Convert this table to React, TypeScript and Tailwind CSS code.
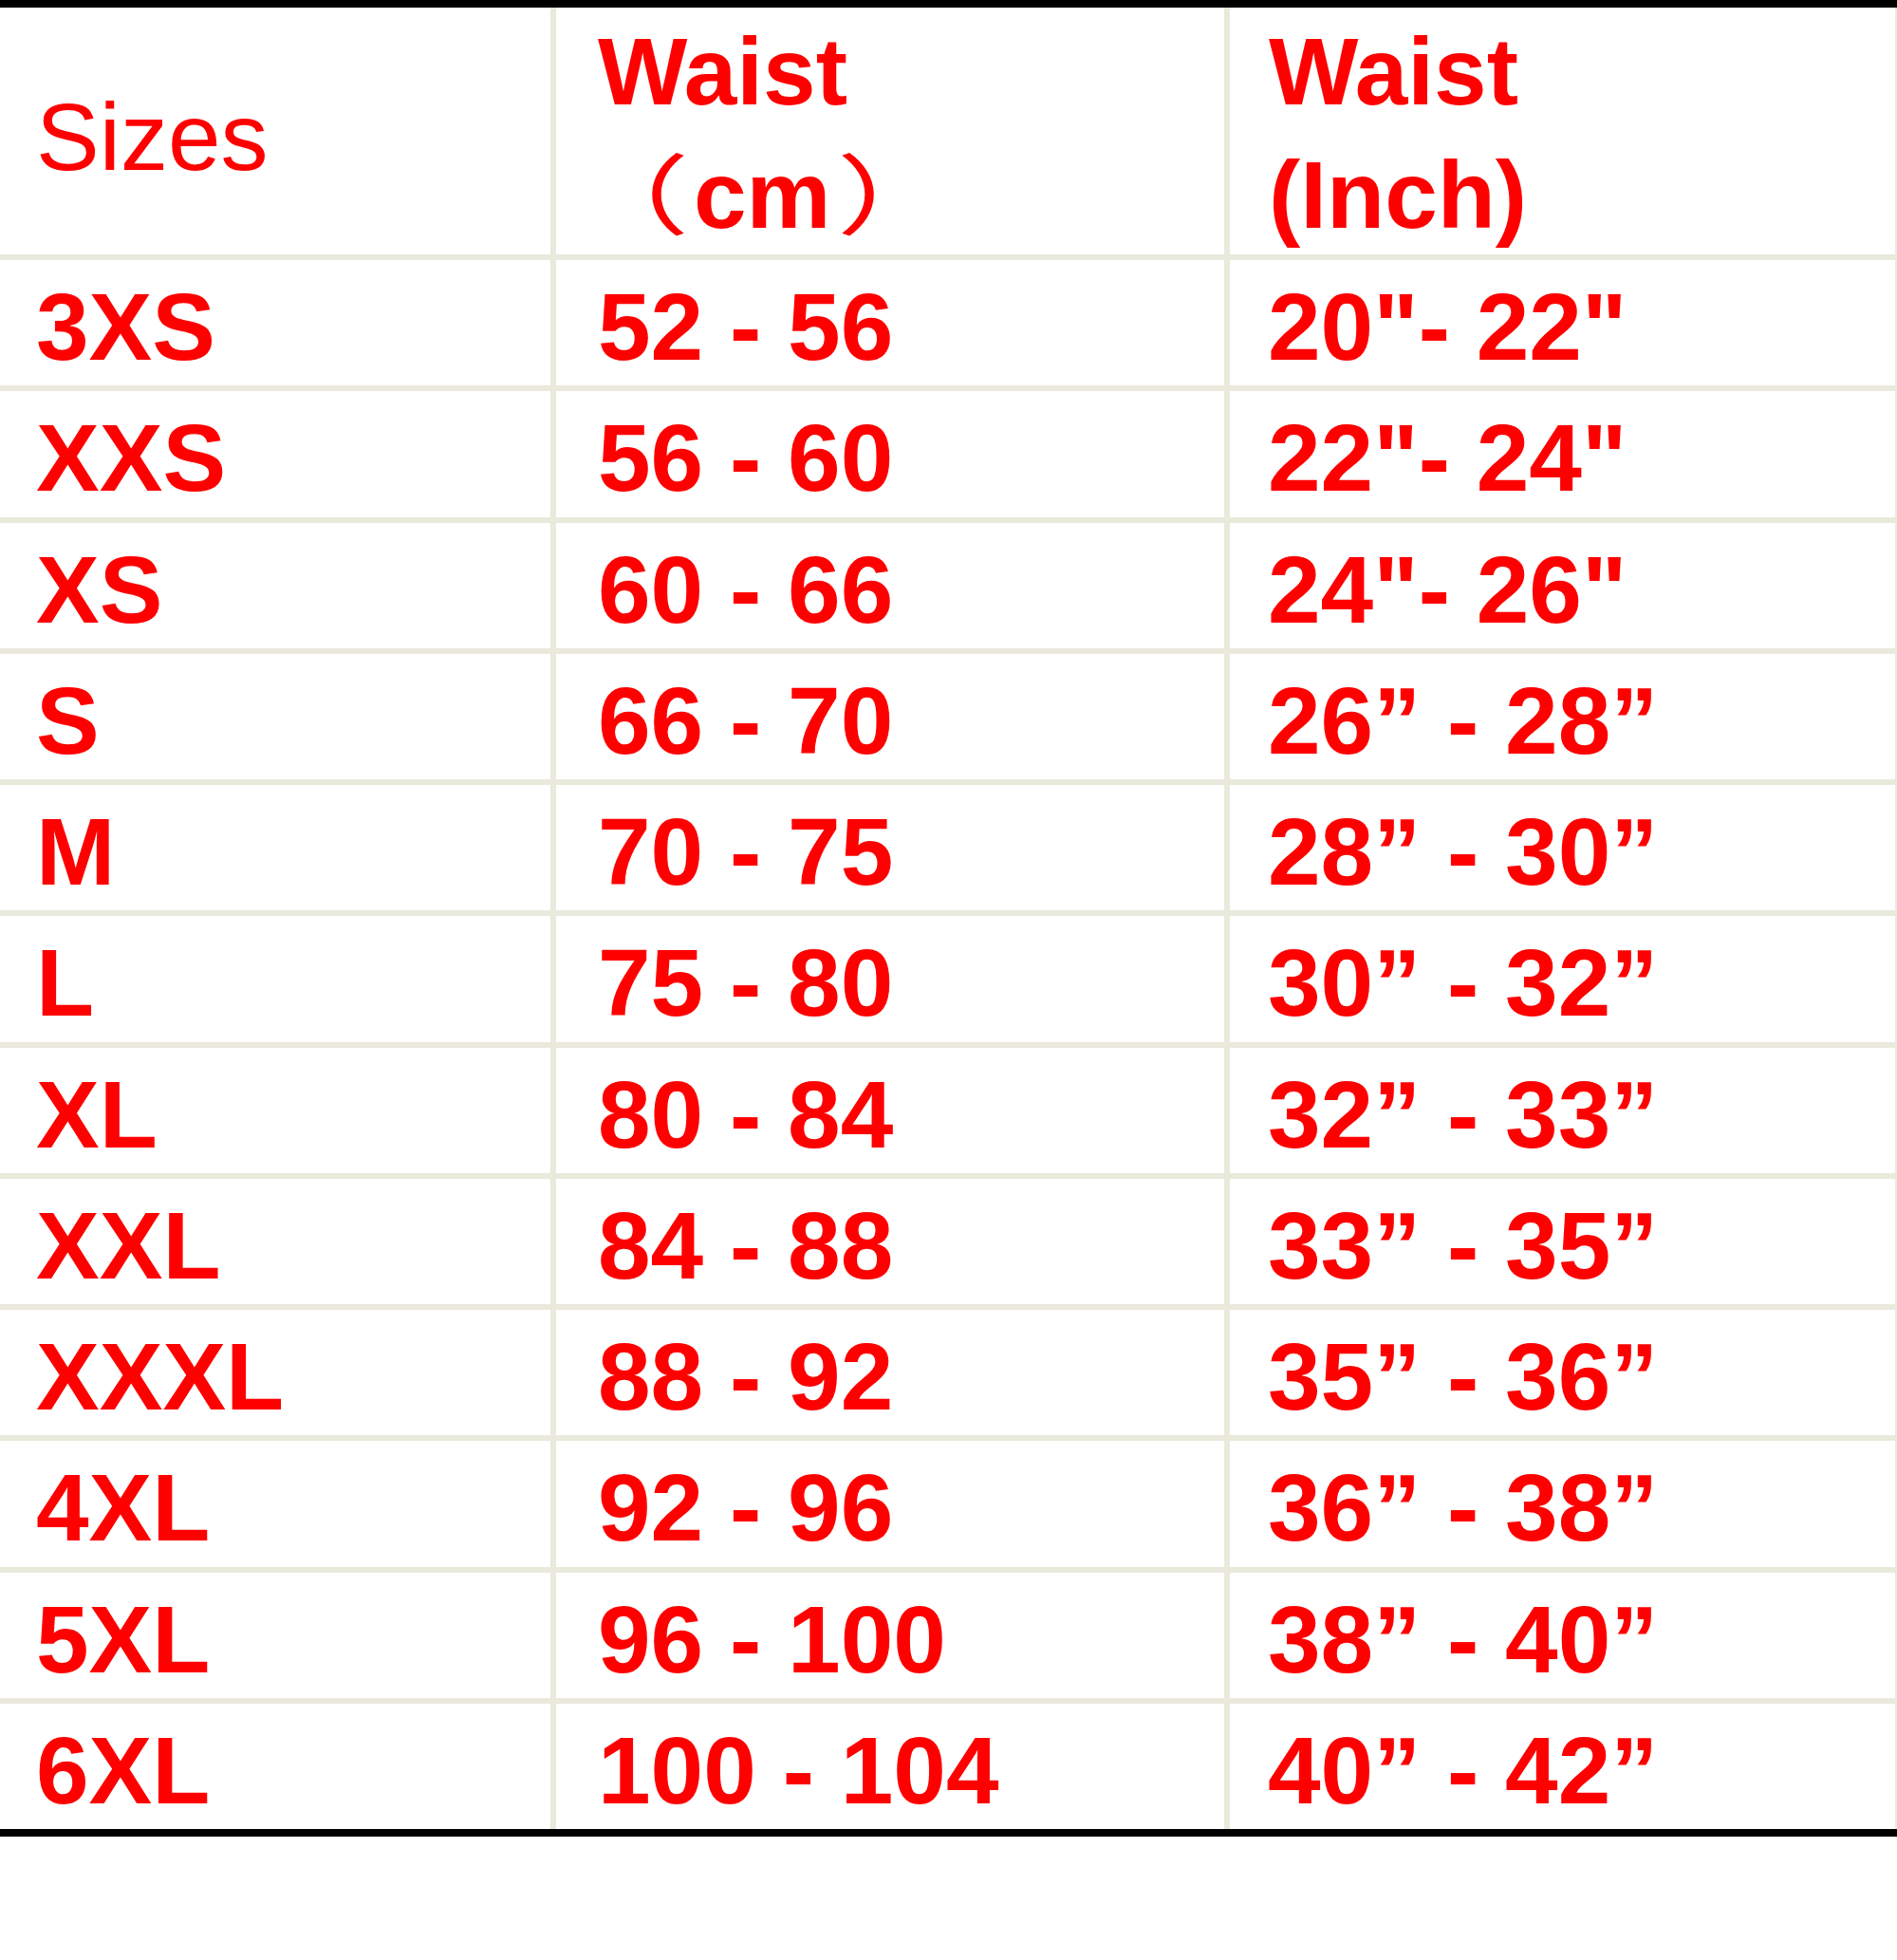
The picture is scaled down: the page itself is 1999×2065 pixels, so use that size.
import React from "react";

const rows: [string, string, string][] = [
  ["3XS", "52 - 56", '20"- 22"'],
  ["XXS", "56 - 60", '22"- 24"'],
  ["XS", "60 - 66", '24"- 26"'],
  ["S", "66 - 70", "26\u201d - 28\u201d"],
  ["M", "70 - 75", "28\u201d - 30\u201d"],
  ["L", "75 - 80", "30\u201d - 32\u201d"],
  ["XL", "80 - 84", "32\u201d - 33\u201d"],
  ["XXL", "84 - 88", "33\u201d - 35\u201d"],
  ["XXXL", "88 - 92", "35\u201d - 36\u201d"],
  ["4XL", "92 - 96", "36\u201d - 38\u201d"],
  ["5XL", "96 - 100", "38\u201d - 40\u201d"],
  ["6XL", "100 - 104", "40\u201d - 42\u201d"],
];

const font = "font-['Liberation_Sans','Noto_Sans_CJK_SC',sans-serif]";

export default function App() {
  return (
    <div className={`w-[1999px] h-[2065px] bg-white text-[#ff0000] ${font}`}>
      <div className="h-[8px] bg-black" />
      <div className="grid grid-cols-[580px_704px_701px] grid-rows-[260px_repeat(12,132.25px)] gap-[6px] bg-[#e9e9dc] pr-[2px]">
        <div className="bg-white pl-[38px] pt-[86px] text-[100px] leading-[100px] font-normal whitespace-pre">
          Sizes
        </div>
        <div className="bg-white pl-[44px] pt-[2px] text-[100px] leading-[130px] font-bold whitespace-pre">
          <div>Waist</div>
          <div>
            <span className="relative -left-[12px] inline-block w-[101px] scale-x-[1.4] font-['Noto_Sans_CJK_SC',sans-serif] font-normal text-[92px] leading-[92px]">（</span>
            cm
            <span className="inline-block w-[92px] ml-[24px] scale-x-[1.4] font-['Noto_Sans_CJK_SC',sans-serif] font-normal text-[92px] leading-[92px]">）</span>
          </div>
        </div>
        <div className="bg-white pl-[41px] pt-[2px] text-[100px] leading-[130px] font-bold whitespace-pre">
          <div>Waist</div>
          <div>(Inch)</div>
        </div>
        {rows.map((r, i) => (
          <React.Fragment key={i}>
            <div className="bg-white pl-[38px] pt-[20px] text-[100px] leading-[100px] font-bold whitespace-pre">
              {r[0]}
            </div>
            <div className="bg-white pl-[44px] pt-[20px] text-[100px] leading-[100px] font-bold whitespace-pre">
              {r[1]}
            </div>
            <div className="bg-white pl-[40px] pt-[20px] text-[100px] leading-[100px] font-bold whitespace-pre">
              {r[2]}
            </div>
          </React.Fragment>
        ))}
      </div>
      <div className="h-[8px] bg-black" />
    </div>
  );
}
